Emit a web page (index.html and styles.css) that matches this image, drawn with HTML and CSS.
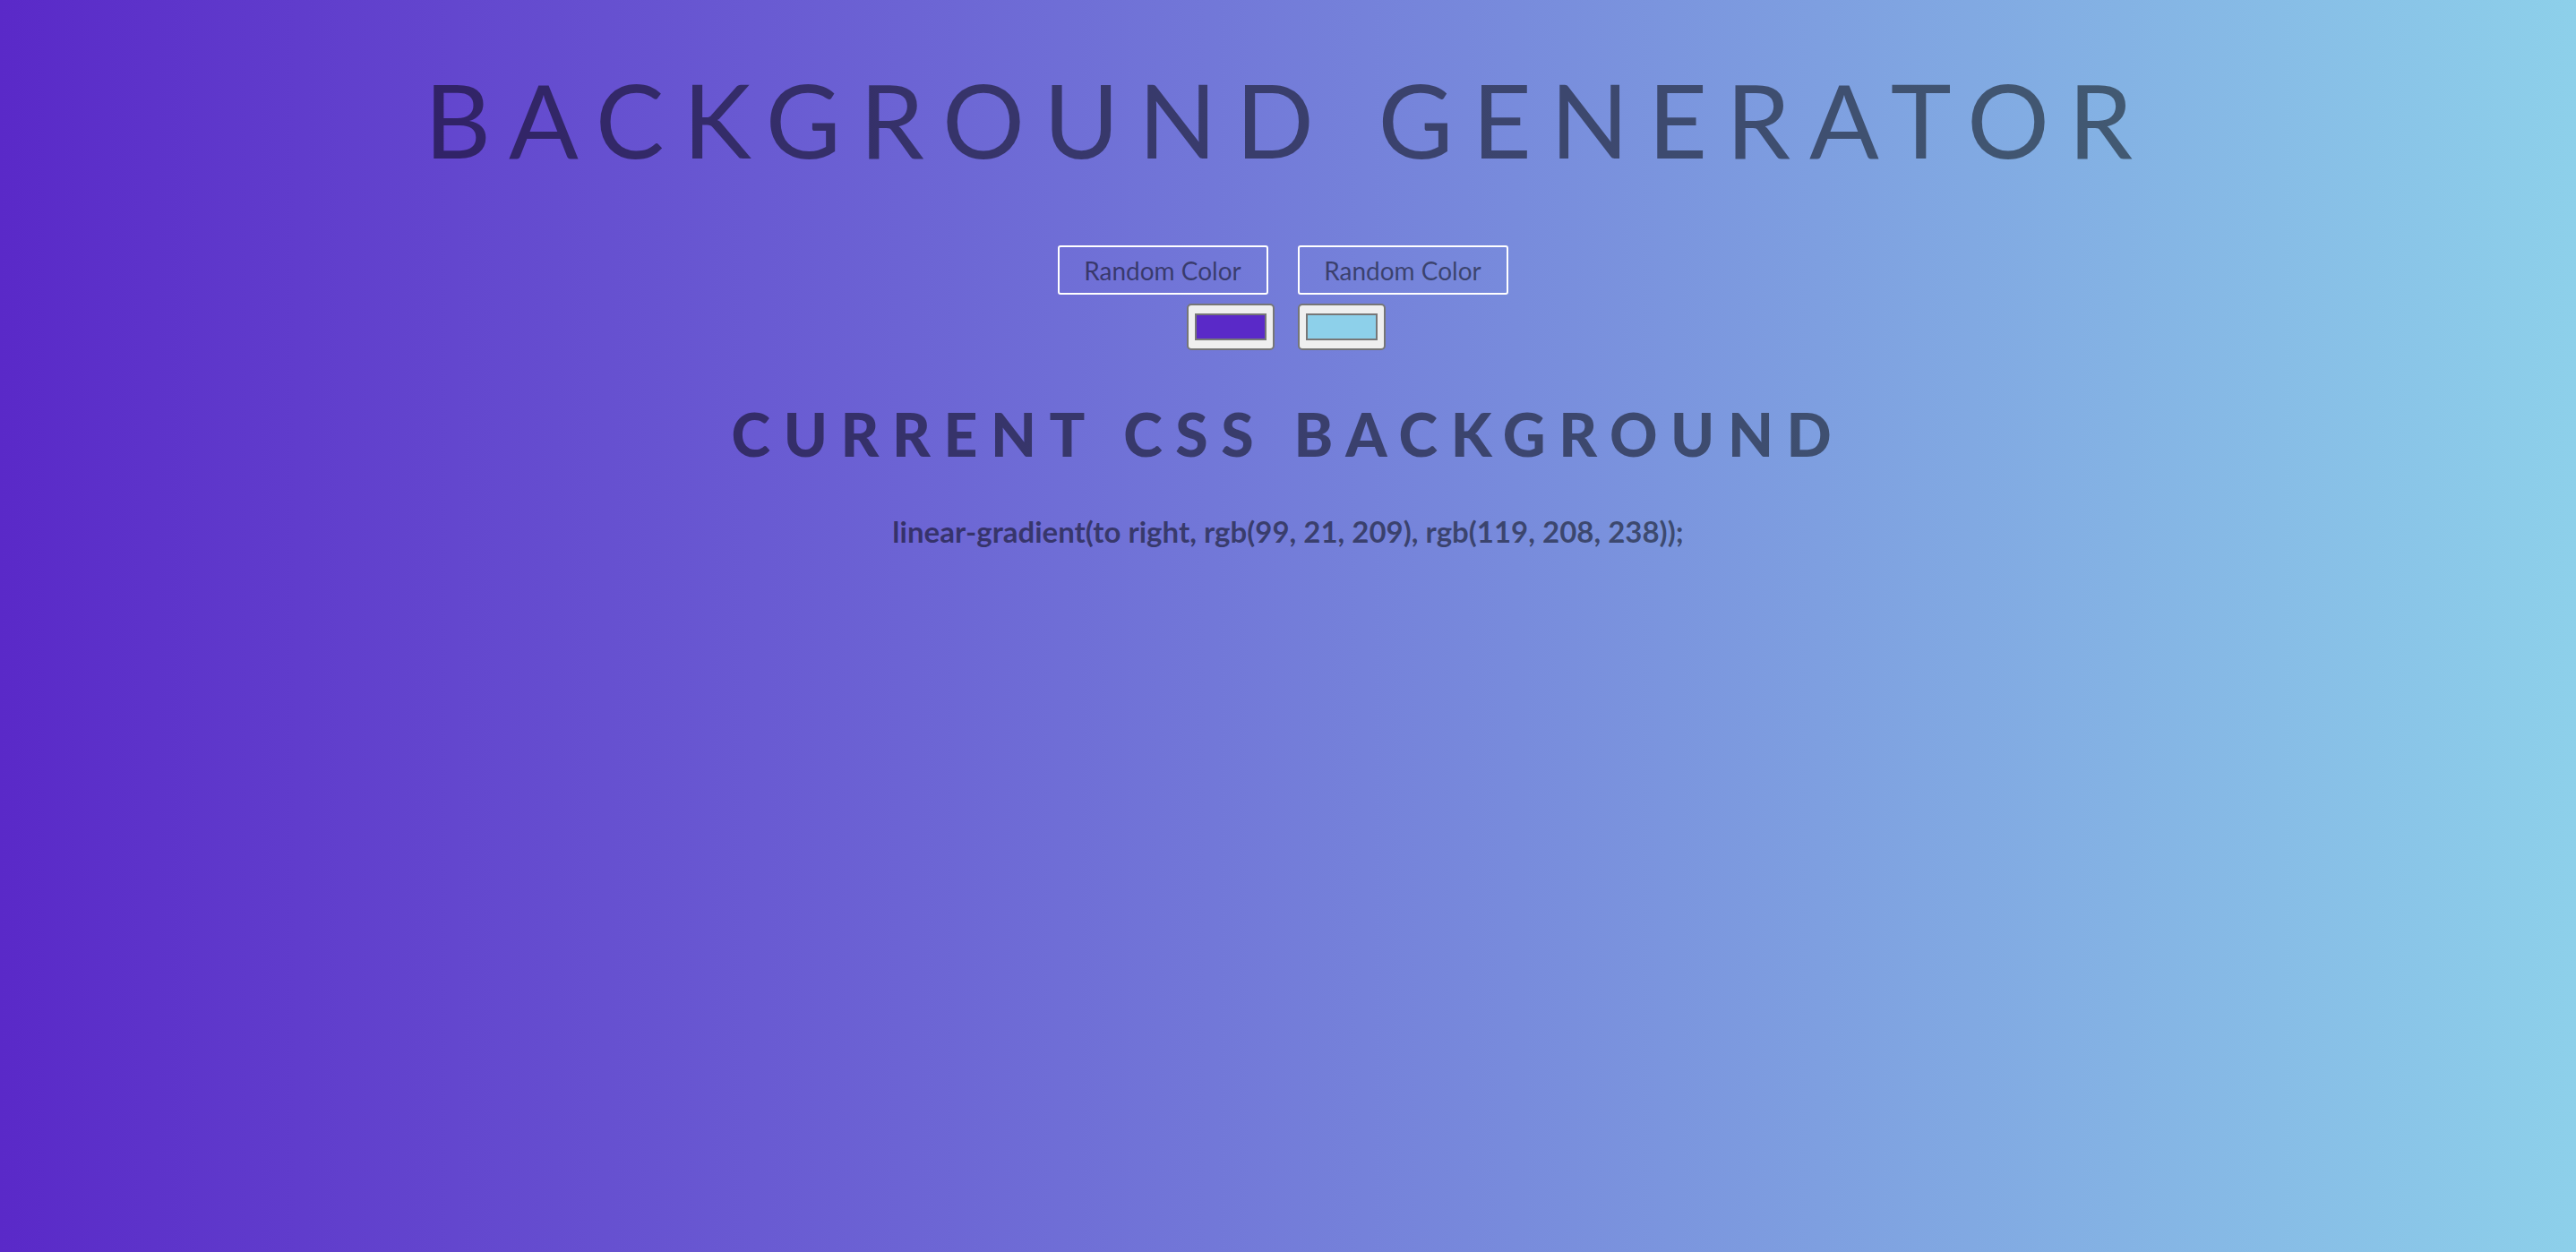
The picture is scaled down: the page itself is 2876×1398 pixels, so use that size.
FILE: index.html
```html
<!DOCTYPE html>
<html>
<head>
<meta charset="utf-8">
<title>Background Generator</title>
<link rel="stylesheet" href="styles.css">
</head>
<body class="page">
  <h1 class="title">Background Generator</h1>
  <div class="controls">
    <div class="btn-row">
      <button class="btn" type="button">Random Color</button>
      <button class="btn" type="button">Random Color</button>
    </div>
    <div class="picker-row">
      <span class="picker"><span class="swatch swatch-a"></span></span>
      <span class="picker"><span class="swatch swatch-b"></span></span>
    </div>
  </div>
  <h3 class="subtitle">Current CSS Background</h3>
  <h3 class="code">linear-gradient(to right, rgb(99, 21, 209), rgb(119, 208, 238));</h3>
</body>
</html>
```
FILE: styles.css
```css
html {
  height: 100%;
}
.page {
  margin: 0;
  min-height: 100%;
  background: linear-gradient(to right, #5a29c8, #8dd0ea);
  font-family: Lato, "Open Sans", sans-serif;
  color: rgba(0, 0, 0, 0.5);
  text-align: center;
  display: flex;
  flex-direction: column;
  align-items: center;
}
.title {
  margin: 63px 0 0;
  font-size: 115px;
  font-weight: 400;
  line-height: 1.2;
  text-transform: uppercase;
  letter-spacing: 21px;
}
.controls {
  margin-top: 73px;
  display: flex;
  flex-direction: column;
  align-items: center;
  gap: 10px;
}
.btn-row {
  display: flex;
  gap: 33px;
  margin-right: 12px;
}
.btn {
  width: 235px;
  height: 55px;
  background: transparent;
  border: 2px solid #ffffff;
  border-radius: 3px;
  font-family: Lato, sans-serif;
  font-size: 28px;
  color: rgba(0, 0, 0, 0.5);
  padding: 0;
}
.picker-row {
  display: flex;
  gap: 26px;
  margin-right: 5px;
}
.picker {
  width: 98px;
  height: 52px;
  box-sizing: border-box;
  background: #efefef;
  border: 2px solid #767676;
  border-radius: 5px;
  display: flex;
  align-items: center;
  justify-content: center;
}
.swatch {
  width: 80px;
  height: 30px;
  box-sizing: border-box;
  border: 2px solid #777777;
}
.swatch-a { background: #5a29c8; }
.swatch-b { background: #8dd0ea; }
.subtitle {
  margin: 54px 0 0;
  font-size: 66px;
  font-weight: 900;
  line-height: 1.2;
  text-transform: uppercase;
  letter-spacing: 14.6px;
}
.code {
  margin: 50px 0 0;
  font-size: 33px;
  font-weight: 700;
  line-height: 1.2;
}
```
